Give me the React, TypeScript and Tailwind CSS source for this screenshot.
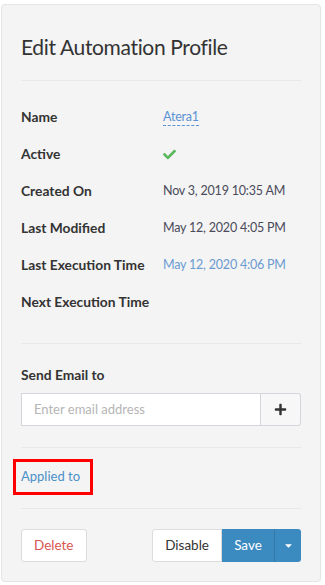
import { FaCheck, FaPlus, FaCaretDown } from "react-icons/fa";

const rows = [
  { label: "Name", value: "Atera1", kind: "link" },
  { label: "Active", value: "", kind: "check" },
  { label: "Created On", value: "Nov 3, 2019 10:35 AM", kind: "text" },
  { label: "Last Modified", value: "May 12, 2020 4:05 PM", kind: "text" },
  { label: "Last Execution Time", value: "May 12, 2020 4:06 PM", kind: "blue" },
  { label: "Next Execution Time", value: "", kind: "text" },
];

const App = () => {
  return (
    <div className="w-[325px] h-[585px] bg-white pt-[4px] pl-[1px]" style={{ fontFamily: "Lato, 'Open Sans', sans-serif" }}>
      <div className="w-[320px] h-[578px] bg-[#f4f4f4] border border-[#e4e4e4] rounded-[4px] px-[19px] pt-[27px] text-[#333]">
        <h1 className="text-[21px] leading-[30px] text-[#333] tracking-[-0.35px]">Edit Automation Profile</h1>
        <div className="mt-[18px] border-t border-[#e8e8e8]" />

        <div className="mt-[18px]">
          {rows.map((r) => (
            <div key={r.label} className="h-[37px] flex items-center">
              <div className="w-[142px] font-bold text-[13.8px] text-[#333]">{r.label}</div>
              <div className="text-[12.5px] tracking-[-0.2px]">
                {r.kind === "link" && (
                  <span className="text-[#5b93d3] border-b border-dashed border-[#5b93d3] pb-[1px]">{r.value}</span>
                )}
                {r.kind === "check" && <FaCheck className="text-[#5cb85c] text-[13px]" />}
                {r.kind === "text" && <span className="text-[#4a4a5a]">{r.value}</span>}
                {r.kind === "blue" && <span className="text-[#6b9bd0]">{r.value}</span>}
              </div>
            </div>
          ))}
        </div>

        <div className="mt-[22px] border-t border-[#e8e8e8]" />

        <div className="mt-[21px] text-[13.8px] leading-[20px] font-bold">Send Email to</div>
        <div className="mt-[8px] flex h-[33px]">
          <input
            className="flex-1 min-w-0 bg-white border border-[#d5d5dc] px-[12px] text-[13px] placeholder:text-[#b5b5b5] outline-none"
            placeholder="Enter email address"
          />
          <button className="w-[40px] bg-[#f7f7f7] border border-l-0 border-[#d5d5dc] rounded-r-[3px] flex items-center justify-center text-[#333]">
            <FaPlus className="text-[13px]" />
          </button>
        </div>

        <div className="mt-[21px] border-t border-[#e8e8e8]" />

        <div className="mt-[11px] -ml-[8px] w-[80px] h-[36px] border-[3px] border-[#ff0000] flex items-center pl-[5px]">
          <span className="text-[13px] text-[#4a90c8]">Applied to</span>
        </div>

        <div className="mt-[13px] border-t border-[#e8e8e8]" />

        <div className="mt-[20px] flex items-center justify-between h-[33px]">
          <button className="h-[33px] px-[12px] bg-white border border-[#dcdcdc] rounded-[3px] text-[13.5px] text-[#d9534f]">Delete</button>
          <div className="flex h-[33px]">
            <button className="px-[12px] bg-white border border-[#dcdcdc] rounded-l-[3px] text-[13.5px] text-[#333]">Disable</button>
            <button className="w-[53px] bg-[#3b8ac0] text-white text-[13.5px] border-r border-[#3479a8]">Save</button>
            <button className="w-[26px] bg-[#3b8ac0] text-white rounded-r-[3px] flex items-center justify-center">
              <FaCaretDown className="text-[11px]" />
            </button>
          </div>
        </div>
      </div>
    </div>
  );
};

export default App;
